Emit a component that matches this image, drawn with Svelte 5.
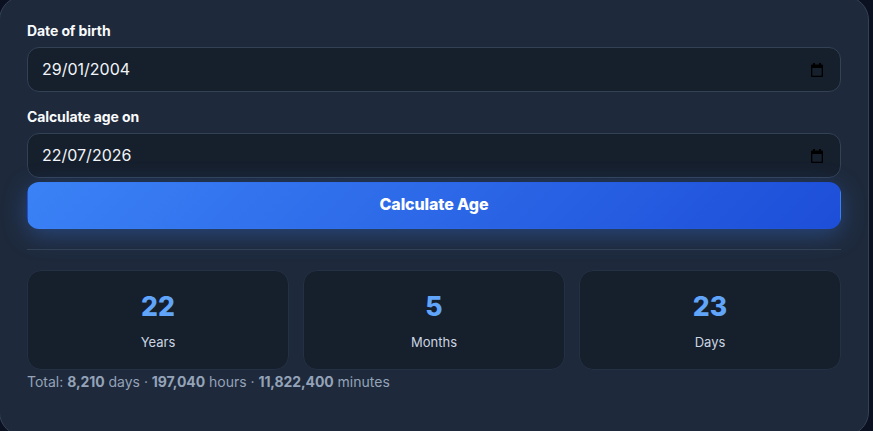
<script>
  let birth = "29/01/2004";
  let on = "22/07/2026";

  const stats = [
    { value: 22, label: "Years" },
    { value: 5, label: "Months" },
    { value: 23, label: "Days" },
  ];
</script>

<div class="card">
  <label class="lbl" for="birth">Date of birth</label>
  <div class="field">
    <input id="birth" type="text" bind:value={birth} />
    <svg class="cal" width="14" height="16" viewBox="0 0 14 16">
      <path d="M3 1h2v1.500h4V1h2v1.500h1a1 1 0 0 1 1 1V14a1 1 0 0 1-1 1H2a1 1 0 0 1-1-1V3.500a1 1 0 0 1 1-1h1zM2.300 6v7.700h9.400V6z" />
    </svg>
  </div>

  <label class="lbl second" for="on">Calculate age on</label>
  <div class="field">
    <input id="on" type="text" bind:value={on} />
    <svg class="cal" width="14" height="16" viewBox="0 0 14 16">
      <path d="M3 1h2v1.500h4V1h2v1.500h1a1 1 0 0 1 1 1V14a1 1 0 0 1-1 1H2a1 1 0 0 1-1-1V3.500a1 1 0 0 1 1-1h1zM2.300 6v7.700h9.400V6z" />
    </svg>
  </div>

  <button type="button" class="go">Calculate Age</button>

  <hr />

  <div class="stats">
    {#each stats as s}
      <div class="stat">
        <div class="num">{s.value}</div>
        <div class="name">{s.label}</div>
      </div>
    {/each}
  </div>

  <p class="total">
    Total: <strong>8,210</strong> days · <strong>197,040</strong> hours · <strong>11,822,400</strong> minutes
  </p>
</div>

<style>
  :global(body) {
    margin: 0;
    background: #0b1120;
    overflow: hidden;
  }

  * {
    box-sizing: border-box;
  }

  .card {
    width: 870px;
    height: 440px;
    margin: -4px 0 0 -1px;
    padding: 24px 27px 0;
    background: #1e293b;
    border: 1px solid #334155;
    border-radius: 24px;
    font-family: Inter, "Liberation Sans", sans-serif;
  }

  .lbl {
    display: block;
    height: 20px;
    margin-bottom: 6px;
    color: #f8fafc;
    font-size: 14px;
    font-weight: 700;
    letter-spacing: -0.1px;
    line-height: 20px;
  }

  .second {
    margin-top: 15px;
  }

  .field {
    display: flex;
    align-items: center;
    height: 45px;
    padding: 0 16px 0 14px;
    background: #161f2c;
    border: 1px solid #334155;
    border-radius: 12px;
  }

  .field input {
    flex: 1;
    min-width: 0;
    padding: 0 0 1px;
    background: none;
    border: 0;
    outline: 0;
    color: #f1f5f9;
    font: 400 16px Inter, "Liberation Sans", sans-serif;
  }

  .cal {
    flex: none;
    fill: #000;
  }

  .go {
    display: block;
    width: 100%;
    height: 47px;
    margin-top: 4px;
    padding: 0 0 3px;
    border: 1px solid transparent;
    border-radius: 12px;
    background: linear-gradient(135deg, #3b82f6, #1d4ed8);
    box-shadow: 0 6px 24px rgba(59, 130, 246, 0.35);
    color: #fff;
    font: 800 16px Inter, "Liberation Sans", sans-serif;
    letter-spacing: -0.1px;
  }

  hr {
    height: 1px;
    margin: 20px 0;
    border: 0;
    background: #334155;
  }

  .stats {
    display: grid;
    grid-template-columns: repeat(3, 1fr);
    gap: 14px;
  }

  .stat {
    height: 100px;
    padding-top: 18px;
    text-align: center;
    background: #161f2c;
    border: 1px solid #243044;
    border-radius: 14px;
  }

  .num {
    height: 34px;
    color: #60a5fa;
    font-size: 26.5px;
    font-weight: 800;
    line-height: 34px;
  }

  .name {
    margin-top: 9px;
    color: #cbd5e1;
    font-size: 13px;
    line-height: 20px;
  }

  .total {
    margin: 2px 0 0;
    color: #94a3b8;
    font-size: 14px;
    line-height: 20px;
  }

  .total strong {
    font-weight: 700;
    letter-spacing: -0.1px;
  }
</style>
